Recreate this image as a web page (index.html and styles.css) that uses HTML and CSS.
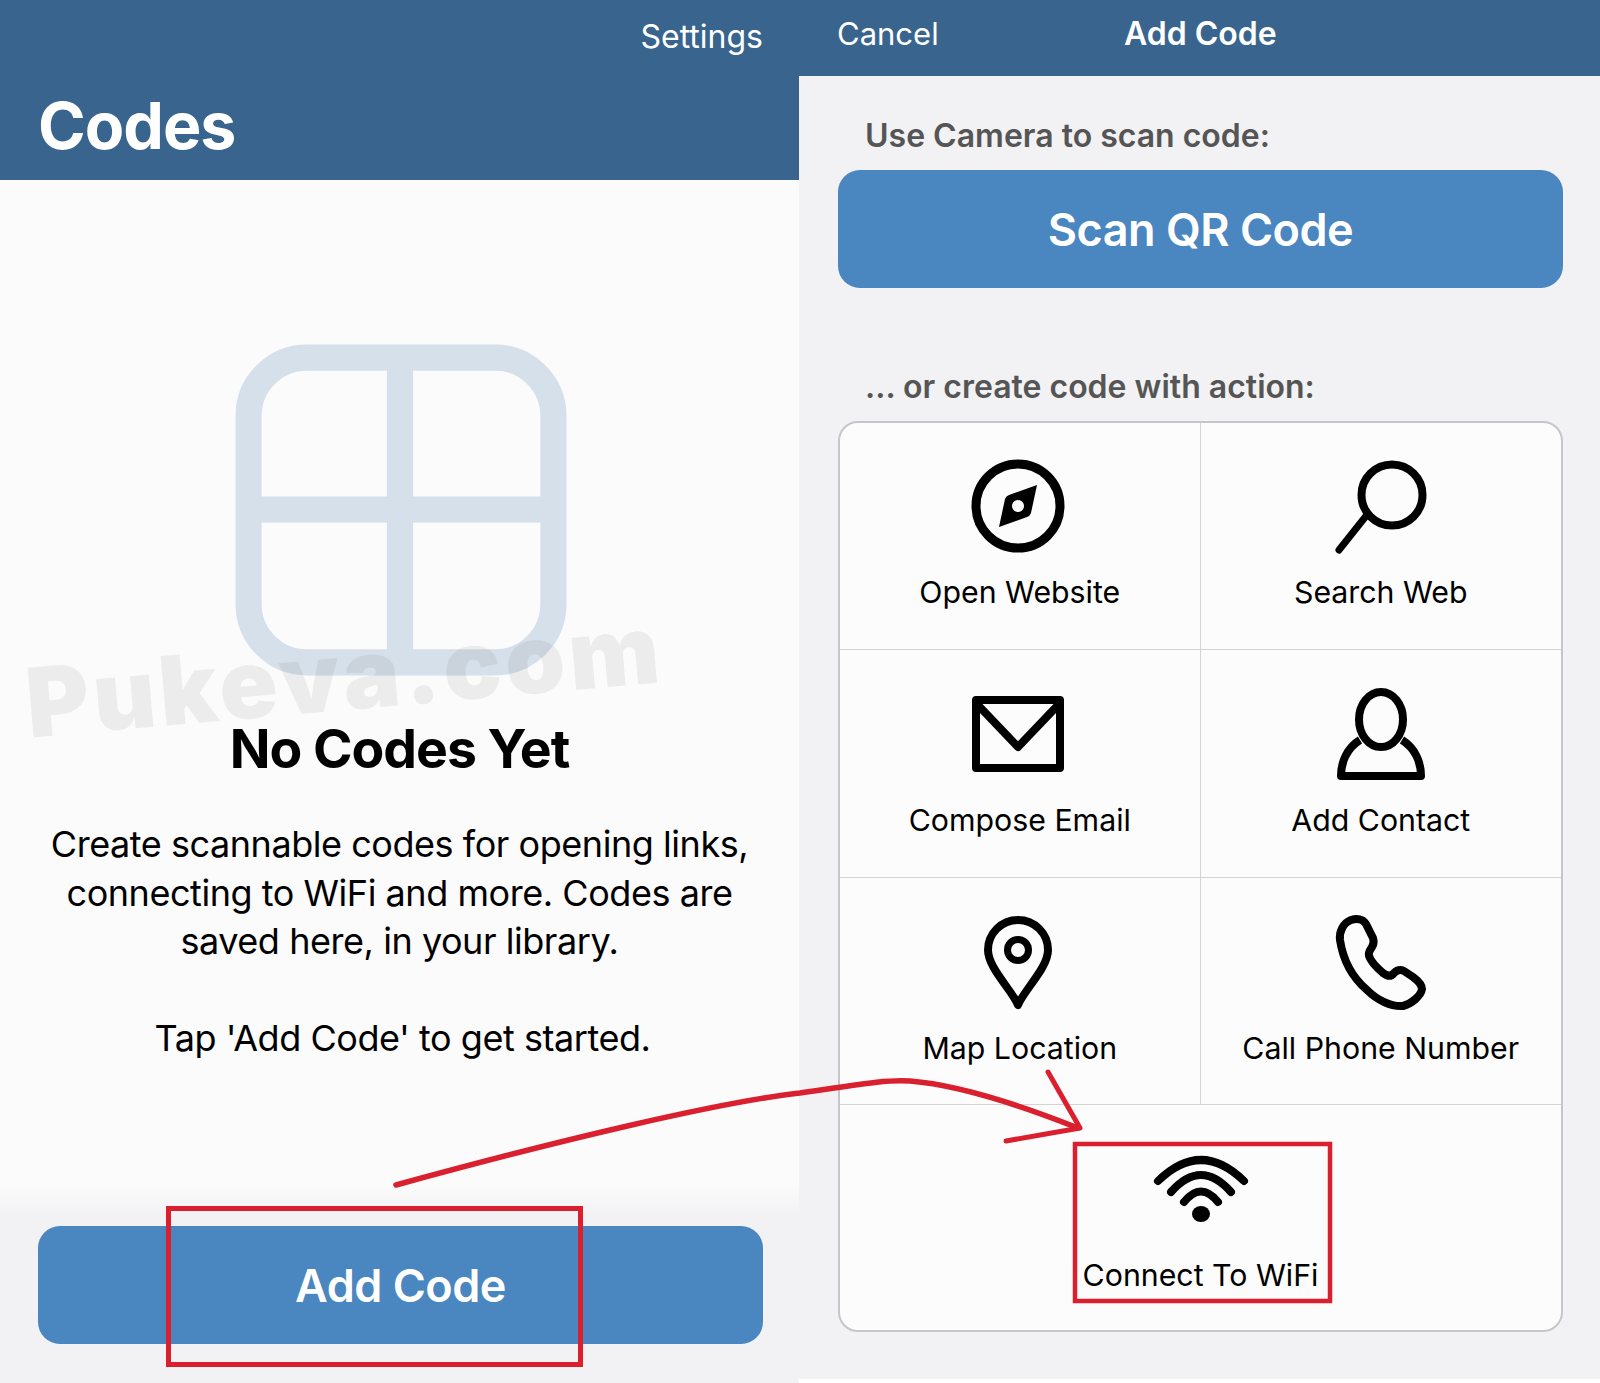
FILE: index.html

```html
<!DOCTYPE html>
<html lang="en">
<head>
  <meta charset="UTF-8" />
  <title>Codes</title>
  <link rel="stylesheet" href="styles.css">
</head>
<body>
  <div class="shot">
    <section class="panel library">
      <header class="lib-head">
        <div class="lib-nav"><span class="nav-link settings">Settings</span></div>
        <h1>Codes</h1>
      </header>
      <main class="empty">
        <svg class="grid-icon" viewBox="0 0 330 330" fill="none" stroke="#d6e0ea" stroke-width="26">
          <rect x="13.5" y="13.5" width="303" height="303" rx="58" />
          <path d="M164 14V316M14 164.5H316" />
        </svg>
        <h2>No Codes Yet</h2>
        <p>Create scannable codes for opening links, connecting to WiFi and more. Codes are saved here, in your library.</p>
        <p>Tap 'Add Code' to get started.</p>
      </main>
      <footer class="lib-foot">
        <button class="big-btn add-btn">Add Code</button>
      </footer>
    </section>

    <section class="panel add">
      <header class="add-head">
        <span class="nav-link">Cancel</span>
        <span class="add-title">Add Code</span>
      </header>
      <div class="add-body">
        <div class="hint">Use Camera to scan code:</div>
        <button class="big-btn scan-btn">Scan QR Code</button>
        <div class="hint hint-action">... or create code with action:</div>
        <div class="actions">
          <div class="action">
            <svg class="icon" viewBox="0 0 104 104">
              <circle cx="52" cy="52" r="42" fill="none" stroke="#000" stroke-width="9" />
              <path fill="#000" fill-rule="evenodd" d="M71 31 65 59Q64 62 61 63L33 73 39 45Q40 42 43 41ZM52 46a6 6 0 1 0 .01 0Z" />
            </svg>
            <span>Open Website</span>
          </div>
          <div class="action">
            <svg class="icon" viewBox="0 0 104 104" fill="none" stroke="#000" stroke-width="8" stroke-linecap="round">
              <circle cx="63" cy="41" r="30.5" />
              <path stroke-width="7" d="M37 62 10 96" />
            </svg>
            <span>Search Web</span>
          </div>
          <div class="action">
            <svg class="icon" viewBox="0 0 104 104" fill="none" stroke="#000" stroke-width="8" stroke-linejoin="round">
              <rect x="10" y="18" width="84" height="68" />
              <path d="M10 21 52 65 94 21" />
            </svg>
            <span>Compose Email</span>
          </div>
          <div class="action">
            <svg class="icon" viewBox="0 0 104 104" fill="none" stroke="#000" stroke-width="8" stroke-linejoin="round">
              <ellipse cx="52" cy="37.5" rx="22" ry="27.5" />
              <path d="M31 58C18 66 12 80 12 94H92C92 80 86 66 73 58" />
            </svg>
            <span>Add Contact</span>
          </div>
          <div class="action">
            <svg class="icon" viewBox="0 0 104 104" fill="none" stroke="#000" stroke-width="8" stroke-linejoin="round">
              <path d="M52 95C46 80 22 58 22 40A30 30 0 0 1 82 40C82 58 58 80 52 95Z" />
              <circle cx="52" cy="40" r="10.5" stroke-width="7" />
            </svg>
            <span>Map Location</span>
          </div>
          <div class="action">
            <svg class="icon" viewBox="0 0 104 104" fill="none" stroke="#000" stroke-width="8" stroke-linejoin="round">
              <path d="M22 10C14 13 10 22 11 30C14 50 24 68 38 80C48 90 62 97 74 96C82 94 92 86 93 79C93 74 88 70 84 67L75 61C71 59 68 60 65 63C62 67 58 66 54 63C47 57 42 52 40 46C39 42 41 40 43 37C45 34 45 31 44 28L37 14C34 9 28 8 22 10Z" />
            </svg>
            <span>Call Phone Number</span>
          </div>
          <div class="action action-wide">
            <svg class="icon" viewBox="0 0 104 104" fill="none" stroke="#000" stroke-width="8" stroke-linecap="round">
              <path d="M9 44Q52 2 95 44M22 55Q52 21 82 55M35 65Q52 44 69 65" />
              <ellipse cx="52" cy="77" rx="9" ry="8" fill="#000" stroke="none" />
            </svg>
            <span>Connect To WiFi</span>
          </div>
        </div>
      </div>
    </section>

    <div class="watermark">Pukeva.com</div>

    <svg class="marks" viewBox="0 0 1600 1383" fill="none" stroke="#da1f2e">
      <rect x="168.5" y="1208.5" width="412" height="156" stroke-width="5" />
      <rect x="1075" y="1144" width="255" height="157" stroke-width="4.5" />
      <path stroke-width="5.5" stroke-linecap="round" d="M396 1185C560 1140 720 1102 800 1093C850 1086 885 1079 910 1081C960 1085 1020 1105 1078 1128" />
      <path stroke-width="5" stroke-linecap="round" stroke-linejoin="round" d="M1048 1072 1080 1128 1006 1141" />
    </svg>
  </div>
</body>
</html>
```

FILE: styles.css

```css
* { box-sizing: border-box; }
html, body { margin: 0; padding: 0; }
body {
  font-family: 'Inter', 'Liberation Sans', sans-serif;
  background: #fff;
  color: #000;
}
.shot {
  position: relative;
  display: flex;
  width: 1600px;
  height: 1383px;
  overflow: hidden;
}
.panel { display: flex; flex-direction: column; height: 100%; }
.library { width: 799px; background: #fbfbfc; }
.add { width: 801px; background: #f2f2f4; border-bottom: 4px solid #fff; }
.nav-link { font-size: 31px; color: #fff; font-weight: 400; }
.settings { font-size: 32px; }

/* left screen */
.lib-head { height: 180px; background: #38648d; color: #fff; padding: 0 36px 0 38px; }
.lib-nav { display: flex; justify-content: flex-end; height: 72px; align-items: center; }
h1 { margin: 18px 0 0; font-size: 64.5px; line-height: 72px; font-weight: 700; letter-spacing: -1px; }
.empty {
  flex: 1;
  display: flex;
  flex-direction: column;
  align-items: center;
  padding-top: 164px;
  text-align: center;
}
.grid-icon { width: 332px; height: 332px; display: block; margin-left: 3px; }
h2 { margin: 41px 0 0; font-size: 53.5px; line-height: 64px; font-weight: 700; letter-spacing: -1px; }
.empty p { margin: 39px 0 0; width: 720px; font-size: 36px; line-height: 48.5px; letter-spacing: -.45px; }
.empty p + p { margin: 48px 0 0 6px; }
.lib-foot {
  height: 198px;
  padding: 41px 36px 0 38px;
  background: linear-gradient(#fbfbfc, #f2f2f4 30px);
}
.big-btn {
  display: block;
  width: 100%;
  height: 118px;
  border: none;
  border-radius: 22px;
  background: #4a86bf;
  color: #fff;
  font-family: inherit;
  font-size: 45px;
  font-weight: 600;
  letter-spacing: -.5px;
}

/* right screen */
.add-head {
  height: 76px;
  display: flex;
  align-items: center;
  padding: 0 38px 9px;
  background: #38648d;
}
.add-title {
  flex: 1;
  text-align: center;
  margin-right: 100px;
  color: #fff;
  font-size: 32px;
  font-weight: 600;
}
.add-body { padding: 0 37px 0 39px; }
.hint { margin: 40px 0 0 27px; font-size: 32px; line-height: 40px; font-weight: 600; color: #555; }
.scan-btn { margin-top: 14px; }
.hint-action { margin-top: 79px; }
.actions {
  display: grid;
  grid-template-columns: 1fr 1fr;
  grid-template-rows: 226.5px 228px 227.5px 1fr;
  width: 725px;
  height: 911px;
  margin-top: 14px;
  background: #fcfcfc;
  border: 2px solid #c6c6c8;
  border-radius: 20px;
}
.action {
  display: flex;
  flex-direction: column;
  align-items: center;
  padding-top: 32px;
  font-size: 30.3px;
  line-height: 40px;
  border-bottom: 1px solid #d4d4d6;
}
.action:nth-child(-n+2) { padding-top: 31px; }
.action:nth-child(odd) { border-right: 1px solid #d4d4d6; }
.action:nth-child(odd) .icon { margin-right: 4px; }
.action span { margin-top: 14px; }
.action-wide { grid-column: 1 / 3; border: none !important; }
.action-wide .icon { margin-right: 0 !important; }
.icon { display: block; width: 104px; height: 104px; }

/* overlays */
.watermark {
  position: absolute;
  left: 25px;
  top: 625px;
  font-size: 96px;
  line-height: 100px;
  font-weight: 900;
  letter-spacing: 4px;
  color: rgba(90, 90, 90, .09);
  transform: rotate(-5deg);
}
.marks { position: absolute; left: 0; top: 0; width: 1600px; height: 1383px; }
```
